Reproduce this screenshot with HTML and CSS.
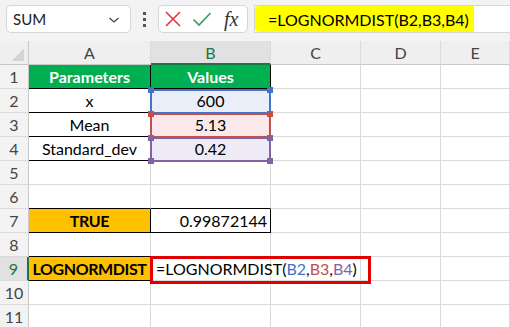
FILE: index.html
```html
<!DOCTYPE html>
<html lang="en">
  <head>
    <meta charset="UTF-8" />
    <meta name="viewport" content="width=device-width, initial-scale=1.0" />
    <title>LOGNORMDIST</title>

    <link rel="stylesheet" href="styles.css">
  </head>
  <body class="body">
    <div class="toolbar">
      <div class="namebox">
        <span>SUM</span>
        <svg class="chevron" width="12" height="8" viewBox="0 0 12 8">
          <path d="M1.5 2 L6 6 L10.5 2" fill="none" stroke="#444" stroke-width="1.3" />
        </svg>
      </div>
      <div class="dots"><i></i><i></i><i></i></div>
      <div class="fxButtons">
        <svg width="18" height="18" viewBox="0 0 18 18">
          <path d="M2 2 L16 16 M16 2 L2 16" stroke="#e0393e" stroke-width="1.6" fill="none" />
        </svg>
        <svg width="20" height="16" viewBox="0 0 20 16">
          <path d="M1.5 8.5 L7 14 L18.5 2" stroke="#3c9a5f" stroke-width="1.6" fill="none" />
        </svg>
        <span class="fx">fx</span>
      </div>
      <div class="formulaBar">
        <span class="highlight">=LOGNORMDIST(B2,B3,B4)</span>
      </div>
    </div>

    <div class="sheet">
      <div class="grid">
        <div class="corner"></div>
        <div class="colHead">A</div>
        <div class="colHead active">B</div>
        <div class="colHead">C</div>
        <div class="colHead">D</div>
        <div class="colHead">E</div>

        <div class="rowHead">1</div>
        <div class="cell black green bold">Parameters</div>
        <div class="cell black green bold">Values</div>
        <div class="cell"></div>
        <div class="cell"></div>
        <div class="cell"></div>

        <div class="rowHead">2</div>
        <div class="cell black">x</div>
        <div class="cell black refBlue">600</div>
        <div class="cell"></div>
        <div class="cell"></div>
        <div class="cell"></div>

        <div class="rowHead">3</div>
        <div class="cell black">Mean</div>
        <div class="cell black refRed">5.13</div>
        <div class="cell"></div>
        <div class="cell"></div>
        <div class="cell"></div>

        <div class="rowHead">4</div>
        <div class="cell black">Standard_dev</div>
        <div class="cell black refPurple">0.42</div>
        <div class="cell"></div>
        <div class="cell"></div>
        <div class="cell"></div>

        <div class="rowHead">5</div>
        <div class="cell"></div>
        <div class="cell"></div>
        <div class="cell"></div>
        <div class="cell"></div>
        <div class="cell"></div>

        <div class="rowHead">6</div>
        <div class="cell blackBottom"></div>
        <div class="cell blackBottom"></div>
        <div class="cell"></div>
        <div class="cell"></div>
        <div class="cell"></div>

        <div class="rowHead">7</div>
        <div class="cell black orange bold">TRUE</div>
        <div class="cell black number">0.99872144</div>
        <div class="cell"></div>
        <div class="cell"></div>
        <div class="cell"></div>

        <div class="rowHead">8</div>
        <div class="cell blackBottom"></div>
        <div class="cell"></div>
        <div class="cell"></div>
        <div class="cell"></div>
        <div class="cell"></div>

        <div class="rowHead active">9</div>
        <div class="cell black orange bold">LOGNORMDIST</div>
        <div class="cell editing">=LOGNORMDIST(<span class="cBlue">B2</span>,<span class="cRed">B3</span>,<span class="cPurple">B4</span>)<i class="caret"></i></div>
        <div class="cell"></div>
        <div class="cell"></div>
        <div class="cell"></div>

        <div class="rowHead">10</div>
        <div class="cell"></div>
        <div class="cell"></div>
        <div class="cell"></div>
        <div class="cell"></div>
        <div class="cell"></div>

        <div class="rowHead">11</div>
        <div class="cell"></div>
        <div class="cell"></div>
        <div class="cell"></div>
        <div class="cell"></div>
        <div class="cell"></div>
      </div>

      <!-- range references shown while editing B9 -->
      <div class="ref blueBox"><b class="h tl"></b><b class="h tr"></b></div>
      <div class="ref redBox"><b class="h tl"></b><b class="h tr"></b></div>
      <div class="ref purpleBox"><b class="h tl"></b><b class="h tr"></b><b class="h bl"></b><b class="h br"></b></div>
      <div class="redFrame"></div>
    </div>
  </body>
</html>
```

FILE: styles.css
```css
.body {
  margin: 0;
  width: 510px;
  height: 327px;
  overflow: hidden;
  background-color: #f3f3f3;
  font-family: Lato, "Liberation Sans", sans-serif;
  color: #000;
}

/* top bar */
.toolbar {
  height: 41px;
  box-sizing: border-box;
  padding: 5px 0 8px 6px;
  display: flex;
  align-items: stretch;
}
.namebox {
  width: 125px;
  box-sizing: border-box;
  background-color: #fff;
  border: 1px solid #d6d6d6;
  border-radius: 5px;
  display: flex;
  align-items: center;
  justify-content: space-between;
  padding: 0 10px 0 6px;
  font-size: 15px;
  color: #222;
}
.chevron {
  margin-top: 2px;
}
.dots {
  width: 27px;
  display: flex;
  flex-direction: column;
  align-items: center;
  justify-content: center;
  gap: 3px;
}
.dots i {
  width: 3px;
  height: 3px;
  background-color: #555;
}
.fxButtons {
  width: 90px;
  box-sizing: border-box;
  background-color: #fff;
  border: 1px solid #d6d6d6;
  border-radius: 5px;
  display: flex;
  align-items: center;
  gap: 10px;
  padding-left: 5px;
}
.fx {
  font-family: "Liberation Serif", serif;
  font-style: italic;
  font-size: 20px;
  color: #333;
  margin-left: 2px;
}
.formulaBar {
  flex: 1;
  margin-left: 6px;
  background-color: #fff;
  border: 1px solid #d6d6d6;
  border-right: none;
  display: flex;
}
.highlight {
  background-color: #ffff00;
  border-radius: 4px 0 0 4px;
  width: 219px;
  box-sizing: border-box;
  padding-left: 13px;
  display: flex;
  align-items: center;
  font-size: 16px;
}

/* sheet */
.sheet {
  position: relative;
  background-color: #fff;
}
.grid {
  display: grid;
  grid-template-columns: 29px 122px 120px 90px 80px 69px;
  grid-auto-rows: 24px;
}
.corner,
.colHead,
.rowHead,
.cell {
  box-sizing: border-box;
  border-right: 1px solid #dadada;
  border-bottom: 1px solid #dadada;
  display: flex;
  align-items: center;
  justify-content: center;
  font-size: 16px;
  white-space: nowrap;
}
.corner {
  background: #efefef linear-gradient(135deg, transparent 50%, #d4d4d4 50%) no-repeat right 4px bottom 3px / 12px 12px;
  border-color: #c8c8c8;
}
.colHead {
  background-color: #efefef;
  color: #444;
  border-bottom-color: #c8c8c8;
}
.rowHead {
  background-color: #f3f3f3;
  color: #444;
  border-right-color: #c8c8c8;
}
.colHead.active {
  background-color: #e1e1e1;
  color: #217346;
  border-bottom: 2px solid #217346;
}
.rowHead.active {
  background-color: #e1e1e1;
  color: #217346;
  border-right: 2px solid #217346;
}
.cell.black {
  border-right-color: #000;
  border-bottom-color: #000;
}
.cell.blackBottom {
  border-bottom-color: #000;
}
.green {
  background-color: #00b050;
  color: #fff;
}
.orange {
  background-color: #ffc000;
  letter-spacing: -0.4px;
}
.bold {
  font-weight: 700;
}
.number {
  justify-content: flex-end;
  padding-right: 3px;
}
.refBlue {
  background-color: #e9eef8;
}
.refRed {
  background-color: #fbe9ea;
}
.refPurple {
  background-color: #efebf6;
}
.editing {
  justify-content: flex-start;
  padding-left: 5px;
  overflow: visible;
}
.cBlue {
  color: #4472c4;
}
.cRed {
  color: #c0504d;
}
.cPurple {
  color: #8064a2;
}
.caret {
  width: 1px;
  height: 19px;
  background-color: #000;
  margin-left: 1px;
}

/* reference boxes and edit frame */
.ref {
  position: absolute;
  left: 150px;
  width: 121px;
  height: 25px;
  box-sizing: border-box;
  border: 2px solid;
}
.blueBox {
  top: 48px;
  border-color: #4472c4;
}
.redBox {
  top: 72px;
  border-color: #c0504d;
}
.purpleBox {
  top: 96px;
  border-color: #8064a2;
}
.h {
  position: absolute;
  width: 6px;
  height: 6px;
}
.blueBox .h {
  background-color: #4472c4;
}
.redBox .h {
  background-color: #c0504d;
}
.purpleBox .h {
  background-color: #8064a2;
}
.tl {
  left: -4px;
  top: -4px;
}
.tr {
  right: -4px;
  top: -4px;
}
.bl {
  left: -4px;
  bottom: -4px;
}
.br {
  right: -4px;
  bottom: -4px;
}
.redFrame {
  position: absolute;
  left: 150px;
  top: 215px;
  width: 221px;
  height: 28px;
  box-sizing: border-box;
  border: 3px solid #e00000;
}
```
